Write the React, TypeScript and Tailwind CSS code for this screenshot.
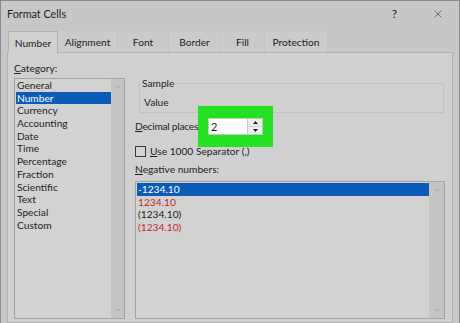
import { ChevronDown, ChevronUp, X } from 'lucide-react';

const categories = ['General', 'Number', 'Currency', 'Accounting', 'Date', 'Time', 'Percentage', 'Fraction', 'Scientific', 'Text', 'Special', 'Custom'];

const negatives = [
    { label: '-1234.10', red: false },
    { label: '1234.10', red: true },
    { label: '(1234.10)', red: false },
    { label: '(1234.10)', red: true },
];

const tabs = [
    { name: 'Number', width: 'w-[50px]' },
    { name: 'Alignment', width: 'w-[60px]' },
    { name: 'Font', width: 'w-[51px]' },
    { name: 'Border', width: 'w-[52px]' },
    { name: 'Fill', width: 'w-[44px]' },
    { name: 'Protection', width: 'w-[63px]' },
];

function ScrollBar({ width }: { width: string }) {
    return (
        <div className={`${width} shrink-0 bg-[#c4c4c4] flex flex-col items-center justify-between py-[4px]`}>
            <ChevronUp size={8} strokeWidth={1.5} className="text-[#8a8a8a]" />
            <ChevronDown size={8} strokeWidth={1.5} className="text-[#8a8a8a]" />
        </div>
    );
}

export default function App() {
    return (
        <div className="w-[460px] h-[323px] overflow-hidden bg-[#c7c7c7] border-x border-t border-[#8c8c8c] flex flex-col font-['Lato',sans-serif] text-[10.2px] text-[#1f1f1f]">
            <div className="h-[26px] shrink-0 flex items-center pl-[6px]">
                <span className="text-[10.8px]">Format Cells</span>
                <span className="ml-auto mr-[35px] text-[12px]">?</span>
                <X size={12} strokeWidth={1.2} className="mr-[15px] text-[#333]" />
            </div>

            <div className="mt-[4px] ml-[7px] flex h-[21px] shrink-0 relative z-10">
                {tabs.map((tab, i) => (
                    <div
                        key={tab.name}
                        className={`${tab.width} flex items-center justify-center pt-[3px] ${i === 0 ? 'bg-[#d0d0d0] border-x border-t border-[#b3b3b3] -mb-px' : 'bg-[#cbcbcb] border-r border-[#c2c2c2]'}`}
                    >
                        {tab.name}
                    </div>
                ))}
            </div>

            <div className="ml-[6px] w-[446px] flex-1 border border-[#b3b3b3] bg-[#d0d0d0] flex pl-[6px]">
                <div className="w-[111px] shrink-0">
                    <div className="mt-[9px] leading-[13px]"><span className="underline">C</span>ategory:</div>
                    <div className="mt-[3px] h-[241px] border border-[#a3a3a3] bg-[#d2d2d2] flex">
                        <div className="flex-1 pl-[1px]">
                            {categories.map(c => (
                                <div key={c} className={`h-[12.7px] leading-[12.7px] px-[1px] ${c === 'Number' ? 'bg-[#0b5bb8] text-white' : ''}`}>{c}</div>
                            ))}
                        </div>
                        <ScrollBar width="w-[13px]" />
                    </div>
                </div>

                <div className="ml-[10px] w-[310px] shrink-0">
                    <fieldset className="mt-[24px] ml-[4px] w-[305px] border border-[#c2c2c2] pl-[1px]">
                        <legend className="px-[1px] leading-[13px]">Sample</legend>
                        <div className="pl-[3px] pt-[6px] pb-[3px] leading-[13px]">Value</div>
                    </fieldset>

                    <div className="mt-[5px] h-[17px] flex items-center">
                        <div className="w-[63px] shrink-0 whitespace-nowrap tracking-[-0.25px]"><span className="underline">D</span>ecimal places:</div>
                        <div className="relative z-10 shrink-0 bg-[#22e222] px-[10px] py-[12px] -my-[12px] flex">
                            <div className="w-[40px] h-[17px] bg-white border border-[#c9c9c9] pl-[2px] leading-[15px] text-[11px]">2</div>
                            <div className="w-[15px] h-[17px] flex flex-col bg-white border-y border-r border-[#c9c9c9]">
                                <div className="flex-1 flex items-center justify-center border-b border-[#d6d6d6] bg-[#ededed]">
                                    <svg width="5" height="3" viewBox="0 0 5 3"><path d="M0 3 L2.5 0 L5 3 Z" fill="#222" /></svg>
                                </div>
                                <div className="flex-1 flex items-center justify-center bg-[#ededed]">
                                    <svg width="5" height="3" viewBox="0 0 5 3"><path d="M0 0 L2.5 3 L5 0 Z" fill="#222" /></svg>
                                </div>
                            </div>
                        </div>
                    </div>

                    <div className="mt-[10px] h-[12px] flex items-center">
                        <div className="w-[11px] h-[11px] border border-[#3a3a3a] bg-[#d4d4d4]" />
                        <span className="ml-[4px] leading-[13px]"><span className="underline">U</span>se 1000 Separator (,)</span>
                    </div>

                    <div className="mt-[6px] leading-[13px]"><span className="underline">N</span>egative numbers:</div>
                    <div className="mt-[5px] h-[138px] w-[310px] border border-[#a3a3a3] bg-[#d2d2d2] flex">
                        <div className="flex-1 pl-[1px] pt-[1px]">
                            {negatives.map((n, i) => (
                                <div
                                    key={i}
                                    className={`h-[12.5px] leading-[12.5px] px-[1px] ${i === 0 ? 'bg-[#0b5bb8] text-white' : n.red ? 'text-[#c3282b]' : ''}`}
                                >
                                    {n.label}
                                </div>
                            ))}
                        </div>
                        <ScrollBar width="w-[15px]" />
                    </div>
                </div>
            </div>
        </div>
    );
}
